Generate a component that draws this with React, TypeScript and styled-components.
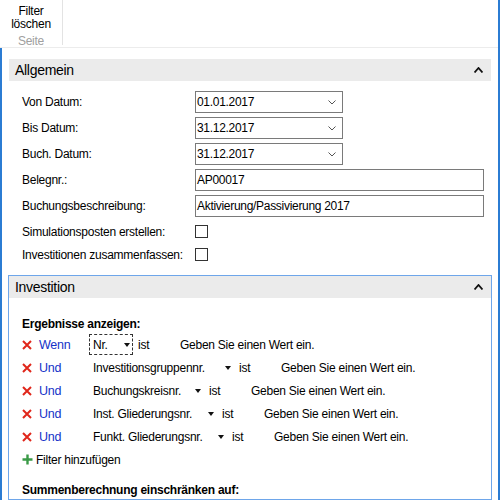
import styled, { createGlobalStyle } from 'styled-components';

const GlobalStyle = createGlobalStyle`
  html, body {
    margin: 0;
    padding: 0;
    background: #ffffff;
  }
  body {
    font-family: "Segoe UI", "Liberation Sans", Arial, sans-serif;
    font-size: 12px;
    letter-spacing: -0.25px;
    color: #000000;
  }
`;

const Window = styled.div`
  width: 500px;
  height: 500px;
  overflow: hidden;
  box-sizing: border-box;
  border-right: 2px solid #2b7cd3;
  display: flex;
  flex-direction: column;
  background: #ffffff;
`;

const Ribbon = styled.div`
  height: 47px;
  flex-shrink: 0;
  display: flex;
  border-bottom: 1px solid #ececec;
`;

const RibbonGroup = styled.div`
  width: 62px;
  display: flex;
  flex-direction: column;
  align-items: center;
  border-right: 1px solid #e3e3e3;
  margin-bottom: 2px;
`;

const RibbonButton = styled.div`
  text-align: center;
  line-height: 13px;
  padding-top: 5px;
  font-size: 12px;
`;

const GroupLabel = styled.div`
  margin-top: 4px;
  color: #a0a0a0;
  font-size: 12px;
  line-height: 13px;
`;

const Content = styled.div`
  flex: 1;
  border-left: 2px solid #2b7cd3;
  padding: 10px 6px 0 6px;
  display: flex;
  flex-direction: column;
`;

const Section = styled.div<{ $active?: boolean; $gap?: number }>`
  border: 1px solid ${p => (p.$active ? '#6ea6ea' : 'transparent')};
  margin-top: ${p => p.$gap ?? 0}px;
  display: flex;
  flex-direction: column;
`;

const SectionHeader = styled.div`
  height: 22px;
  background: #ebebeb;
  display: flex;
  align-items: center;
  justify-content: space-between;
  padding: 0 8px 0 6px;
  font-size: 14px;
  letter-spacing: -0.3px;
`;

const Caret = styled.svg`
  width: 9px;
  height: 6px;
`;

const FormGrid = styled.div`
  display: grid;
  grid-template-columns: 173px 289px;
  grid-auto-rows: 22px;
  row-gap: 4px;
  padding: 10px 0 0 13px;
  align-items: center;
`;

const Label = styled.div`
  white-space: nowrap;
`;

const InputBox = styled.div<{ $narrow?: boolean }>`
  box-sizing: border-box;
  height: 22px;
  width: ${p => (p.$narrow ? '148px' : '289px')};
  border: 1px solid #7a7a7a;
  display: flex;
  align-items: center;
  justify-content: space-between;
  padding: 0 6px 0 1px;
  font-size: 12px;
  letter-spacing: -0.3px;
  white-space: nowrap;
`;

const Chevron = styled.svg`
  width: 8px;
  height: 5px;
`;

const CheckRows = styled.div`
  display: grid;
  grid-template-columns: 173px 1fr;
  grid-auto-rows: 23px;
  padding: 3px 0 0 13px;
  align-items: center;
`;

const CheckBox = styled.div`
  width: 11px;
  height: 11px;
  border: 1px solid #333333;
`;

const InvestBody = styled.div`
  padding: 17px 0 0 13px;
  display: flex;
  flex-direction: column;
`;

const BoldTitle = styled.div<{ $gap?: number }>`
  font-weight: 700;
  height: 18px;
  margin-top: ${p => p.$gap ?? 0}px;
  display: flex;
  align-items: center;
  white-space: nowrap;
`;

const FilterRow = styled.div`
  height: 23px;
  display: flex;
  align-items: center;
  white-space: nowrap;
`;

const RemoveIcon = styled.svg`
  width: 10px;
  height: 10px;
  margin-right: 7px;
`;

const Conj = styled.div`
  width: 50px;
  color: #1432c8;
  font-size: 12.5px;
`;

const Field = styled.div<{ $focused?: boolean; $width: number }>`
  box-sizing: border-box;
  height: 21px;
  width: ${p => p.$width}px;
  display: flex;
  align-items: center;
  justify-content: space-between;
  padding: 0 2px 0 3px;
  border: 1px dashed ${p => (p.$focused ? '#333333' : 'transparent')};
`;

const Arrow = styled.svg`
  width: 6px;
  height: 4px;
`;

const Ist = styled.div`
  margin-left: 5px;
  width: 42px;
`;

const Placeholder = styled.div``;

const AddFilter = styled.div`
  height: 23px;
  display: flex;
  align-items: center;
  gap: 3px;
`;

const filters = [
  { conj: 'Wenn', field: 'Nr.', focused: true, width: 44 },
  { conj: 'Und', field: 'Investitionsgruppennr.', width: 145 },
  { conj: 'Und', field: 'Buchungskreisnr.', width: 115 },
  { conj: 'Und', field: 'Inst. Gliederungsnr.', width: 128 },
  { conj: 'Und', field: 'Funkt. Gliederungsnr.', width: 138 },
];

function UpCaret() {
  return (
    <Caret viewBox="0 0 9 6">
      <path d="M0.5 5.5 L4.5 1 L8.5 5.5" fill="none" stroke="#111" strokeWidth="1.8" />
    </Caret>
  );
}

function DateField({ value }: { value: string }) {
  return (
    <InputBox $narrow>
      <span>{value}</span>
      <Chevron viewBox="0 0 8 5">
        <path d="M0.5 0.5 L4 4 L7.5 0.5" fill="none" stroke="#555" strokeWidth="1" />
      </Chevron>
    </InputBox>
  );
}

export default function App() {
  return (
    <>
      <GlobalStyle />
      <Window>
        <Ribbon>
          <RibbonGroup>
            <RibbonButton>
              Filter
              <br />
              löschen
            </RibbonButton>
            <GroupLabel>Seite</GroupLabel>
          </RibbonGroup>
        </Ribbon>
        <Content>
          <Section>
            <SectionHeader>
              <span>Allgemein</span>
              <UpCaret />
            </SectionHeader>
            <FormGrid>
              <Label>Von Datum:</Label>
              <DateField value="01.01.2017" />
              <Label>Bis Datum:</Label>
              <DateField value="31.12.2017" />
              <Label>Buch. Datum:</Label>
              <DateField value="31.12.2017" />
              <Label>Belegnr.:</Label>
              <InputBox>AP00017</InputBox>
              <Label>Buchungsbeschreibung:</Label>
              <InputBox>Aktivierung/Passivierung 2017</InputBox>
            </FormGrid>
            <CheckRows>
              <Label>Simulationsposten erstellen:</Label>
              <CheckBox />
              <Label>Investitionen zusammenfassen:</Label>
              <CheckBox />
            </CheckRows>
          </Section>
          <Section $active $gap={8}>
            <SectionHeader>
              <span>Investition</span>
              <UpCaret />
            </SectionHeader>
            <InvestBody>
              <BoldTitle>Ergebnisse anzeigen:</BoldTitle>
              {filters.map((f, i) => (
                <FilterRow key={i}>
                  <RemoveIcon viewBox="0 0 10 10">
                    <path d="M1 1 L9 9 M9 1 L1 9" stroke="#e0261a" strokeWidth="2" />
                  </RemoveIcon>
                  <Conj>{f.conj}</Conj>
                  <Field $focused={f.focused} $width={f.width}>
                    <span>{f.field}</span>
                    <Arrow viewBox="0 0 6 4">
                      <path d="M0 0 L6 0 L3 4 Z" fill="#111" />
                    </Arrow>
                  </Field>
                  <Ist>ist</Ist>
                  <Placeholder>Geben Sie einen Wert ein.</Placeholder>
                </FilterRow>
              ))}
              <AddFilter>
                <svg width="11" height="11" viewBox="0 0 11 11">
                  <path d="M5.5 0.5 V10.5 M0.5 5.5 H10.5" stroke="#3a9a46" strokeWidth="2.4" />
                </svg>
                <span>Filter hinzufügen</span>
              </AddFilter>
              <BoldTitle $gap={10}>Summenberechnung einschränken auf:</BoldTitle>
            </InvestBody>
          </Section>
        </Content>
      </Window>
    </>
  );
}
